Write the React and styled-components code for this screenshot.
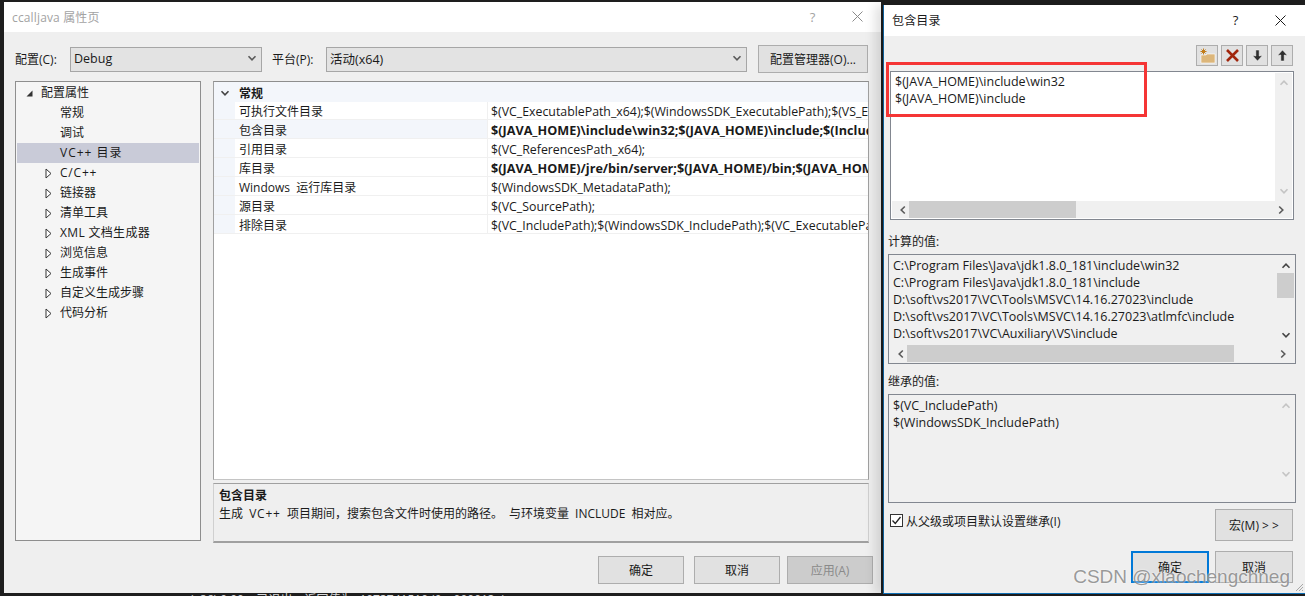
import React from "react";
import styled, { createGlobalStyle } from "styled-components";

const Global = createGlobalStyle`
  html, body {
    margin: 0;
    padding: 0;
    background: #1e1e1e;
  }
  * {
    box-sizing: border-box;
  }
`;

const FONT = `"Open Sans", "Noto Sans CJK SC", sans-serif`;

const Desktop = styled.div`
  position: relative;
  display: flex;
  align-items: flex-start;
  width: 1305px;
  height: 596px;
  overflow: hidden;
  padding-left: 4px;
  background: #1e1e1e;
  font-family: ${FONT};
  font-size: 12px;
  color: #1a1a1a;
`;

const BehindText = styled.div`
  position: absolute;
  left: 190px;
  top: 590px;
  color: #d8d8d8;
  font-size: 12px;
  white-space: pre;
`;

const Dialog = styled.div`
  position: relative;
  display: flex;
  flex-direction: column;
  flex: none;
  width: ${p => p.$width}px;
  height: ${p => p.$height}px;
  margin-top: ${p => p.$top}px;
  margin-left: ${p => p.$left || 0}px;
  background: #efefef;
`;

const SideDialog = styled(Dialog)`
  border-left: 1px solid #0f5f99;
  border-bottom: 1px solid #0f6fb5;
  box-shadow: -8px 0 10px rgba(0, 0, 0, 0.12);
`;

const TitleBar = styled.div`
  display: flex;
  align-items: center;
  flex: none;
  height: ${p => p.$height}px;
  padding-left: 8px;
  padding-bottom: 1px;
  background: #ffffff;
  font-size: 12px;
  color: ${p => (p.$inactive ? "#a3a3a3" : "#1a1a1a")};
`;

const TitleText = styled.span`
  flex: 1;
  letter-spacing: 0.15px;
`;

const TitleHelp = styled.span`
  width: 45px;
  font-size: 13px;
  text-align: center;
`;

const TitleClose = styled.span`
  display: flex;
  justify-content: center;
  width: 45px;
  margin-right: ${p => p.$right}px;
`;

const ToolRow = styled.div`
  display: flex;
  align-items: center;
  height: 28px;
  margin-top: 13px;
  padding-left: 11px;
`;

const ToolLabel = styled.label`
  flex: none;
  width: ${p => p.$width}px;
  padding-bottom: 1px;
  font-size: 12px;
`;

const Combo = styled.div`
  display: flex;
  align-items: center;
  justify-content: space-between;
  flex: none;
  width: ${p => p.$width}px;
  height: 25px;
  margin-right: ${p => p.$right}px;
  padding: 0 4px 2px 3px;
  background: #e3e3e3;
  border: 1px solid #a6a6a6;
  font-size: 12.5px;
`;

const Button = styled.button`
  flex: none;
  width: ${p => p.$width}px;
  height: ${p => p.$height}px;
  margin-right: ${p => p.$after || 0}px;
  padding: 0;
  background: ${p => (p.$disabled ? "#cccccc" : "#e1e1e1")};
  border: ${p => (p.$primary ? "2px solid #0078d7" : "1px solid #adadad")};
  font-family: ${FONT};
  font-size: 12px;
  color: ${p => (p.$disabled ? "#8a8a8a" : "#1a1a1a")};
`;

const Panes = styled.div`
  display: flex;
  gap: 12px;
  margin-top: 8px;
  padding-left: 11px;
`;

const Tree = styled.div`
  flex: none;
  width: 186px;
  height: 460px;
  padding: 1px;
  background: #f5f5f5;
  border: 1px solid #8e8e8e;
`;

const TreeRow = styled.div`
  display: flex;
  align-items: center;
  height: 20px;
  padding-left: ${p => p.$indent}px;
  padding-bottom: 2px;
  background: ${p => (p.$selected ? "#c9cbd8" : "transparent")};
  letter-spacing: ${p => p.$spacing || 0}px;
`;

const TreeMark = styled.span`
  display: flex;
  justify-content: center;
  flex: none;
  width: 12px;
  margin-right: 6px;
  padding-top: 2px;
`;

const Right = styled.div`
  display: flex;
  flex-direction: column;
  gap: 3px;
  width: 656px;
`;

const Grid = styled.div`
  height: 399px;
  background: #ffffff;
  border: 1px solid #a0a0a0;
  border-bottom-color: #c4c4c4;
  border-top-color: #8e8e8e;
  overflow: hidden;
`;

const GroupRow = styled.div`
  display: flex;
  align-items: center;
  height: 20px;
  padding-top: 1px;
  background: #f3f6fb;
  font-weight: 700;
`;

const Gutter = styled.span`
  display: flex;
  justify-content: center;
  flex: none;
  width: 21px;
`;

const GroupName = styled.span`
  margin-left: 4px;
`;

const PropRow = styled.div`
  display: flex;
  height: ${p => p.$height}px;
  line-height: ${p => p.$height + 2}px;
  border-bottom: 1px solid #f0f0f0;
  box-shadow: inset 21px 0 0 #f3f6fb;
`;

const PropName = styled.div`
  flex: none;
  width: 253px;
  margin-left: 21px;
  padding-left: 4px;
  background: ${p => (p.$active ? "#f3f6fb" : "transparent")};
  border-right: 1px solid #f0f0f0;
  word-spacing: 3px;
`;

const PropValue = styled.div`
  flex: 1;
  min-width: 0;
  padding-left: 3px;
  white-space: nowrap;
  overflow: hidden;
  font-size: ${p => (p.$bold ? 12.65 : 12.33)}px;
  font-weight: ${p => (p.$bold ? 700 : 400)};
  background: ${p => (p.$active ? "#ffffff" : "transparent")};
`;

const Description = styled.div`
  height: 60px;
  padding: 3px 5px;
  border-top: 1px solid #a0a0a0;
  border-bottom: 2px solid #a0a0a0;
  border-left: 1px solid #d0d0d0;
  border-right: 1px solid #d0d0d0;
  line-height: 18px;
  word-spacing: 3px;
`;

const DescTitle = styled.div`
  font-weight: 700;
`;

const Wide = styled.span`
  letter-spacing: 0.8px;
`;

const Footer = styled.div`
  display: flex;
  justify-content: flex-end;
  gap: ${p => p.$gap}px;
  margin-top: ${p => p.$top}px;
  padding-right: ${p => p.$right}px;
`;

const IconBar = styled.div`
  display: flex;
  justify-content: flex-end;
  gap: 3px;
  height: 21px;
  margin-top: 9px;
  padding-right: 12px;
`;

const IconButton = styled.div`
  display: flex;
  align-items: center;
  justify-content: center;
  width: 22px;
  height: 21px;
  background: #e1e1e1;
  border: 1px solid #adadad;
`;

const FieldLabel = styled.div`
  height: 15px;
  margin: ${p => p.$top}px 0 5px 4px;
  line-height: 15px;
`;

const ListBox = styled.div`
  display: grid;
  grid-template-columns: 1fr 17px;
  grid-template-rows: 1fr 17px;
  flex: none;
  width: ${p => p.$width}px;
  height: ${p => p.$height}px;
  margin-left: ${p => p.$left}px;
  margin-top: ${p => p.$top || 0}px;
  padding: 1px;
  background: ${p => (p.$active ? "#ffffff" : "#f0f0f0")};
  border: 1px solid #828790;
`;

const ListText = styled.div`
  padding: ${p => p.$top}px 3px;
  font-size: 12.5px;
  line-height: 17px;
  white-space: nowrap;
  overflow: hidden;
`;

const VBar = styled.div`
  position: relative;
  display: flex;
  flex-direction: column;
  justify-content: space-between;
  align-items: center;
  padding: 5px 0;
  background: #f0f0f0;
`;

const VThumb = styled.div`
  position: absolute;
  top: 17px;
  left: 0;
  width: 100%;
  height: 25px;
  background: #cdcdcd;
`;

const HBar = styled.div`
  position: relative;
  display: flex;
  grid-column: 1 / 3;
  align-items: center;
  justify-content: space-between;
  height: 17px;
  padding: 0 6px;
  background: #f0f0f0;
`;

const HThumb = styled.div`
  position: absolute;
  top: 0;
  bottom: 0;
  left: 17px;
  width: ${p => p.$width}px;
  background: #cdcdcd;
`;

const CheckRow = styled.div`
  display: flex;
  align-items: flex-start;
  height: 32px;
  margin: 6px 12px 0 6px;
`;

const CheckBox = styled.span`
  display: flex;
  align-items: center;
  justify-content: center;
  flex: none;
  width: 13px;
  height: 13px;
  margin-top: 5px;
  background: #ffffff;
  border: 1px solid #333333;
`;

const CheckLabel = styled.span`
  flex: 1;
  margin-top: 3px;
  margin-left: 3px;
`;

const Highlight = styled.div`
  position: absolute;
  left: 2px;
  top: 57px;
  width: 261px;
  height: 55px;
  border: 3px solid #f53535;
  pointer-events: none;
`;

const Watermark = styled.div`
  position: absolute;
  right: 15px;
  bottom: 8px;
  font-family: "Liberation Sans", "Noto Sans CJK SC", sans-serif;
  font-size: 19px;
  color: rgba(110, 110, 110, 0.7);
  text-shadow: 0 0 2px #ffffff;
  white-space: nowrap;
`;

const Grip = styled.svg`
  position: absolute;
  right: 1px;
  bottom: 1px;
`;

const Chevron = ({ dir = "down", color = "#5a5a5a", size = 10 }) => {
  const paths = {
    down: "M1.5 3.2 5 6.8 8.5 3.2",
    up: "M1.5 6.8 5 3.2 8.5 6.8",
    left: "M6.8 1.5 3.2 5 6.8 8.5",
    right: "M3.2 1.5 6.8 5 3.2 8.5",
  };
  return (
    <svg width={size} height={size} viewBox="0 0 10 10">
      <path d={paths[dir]} fill="none" stroke={color} strokeWidth="1.6" />
    </svg>
  );
};

const Close = ({ color }) => (
  <svg width="11" height="11" viewBox="0 0 11 11">
    <path d="M.5.5l10 10M10.500.5l-10 10" stroke={color} strokeWidth="1" fill="none" />
  </svg>
);

const Expanded = () => (
  <svg width="7" height="7" viewBox="0 0 7 7">
    <path d="M6.500.5V6.500H.5Z" fill="#333" />
  </svg>
);

const Collapsed = () => (
  <svg width="7" height="11" viewBox="0 0 7 11">
    <path d="M1 1 6 5.500 1 10Z" fill="#fff" stroke="#333" strokeWidth="1" />
  </svg>
);

const NewFolder = () => (
  <svg width="17" height="16" viewBox="0 0 17 16">
    <path d="M2 7h5l1-1h8v9H2Z" fill="#dcb67a" stroke="#fff" strokeWidth=".6" />
    <path d="M4.500.5v6M1.500 3.500h6M2.500 1.500l4 4M6.500 1.500l-4 4" stroke="#c27d1a" strokeWidth="1" />
  </svg>
);

const DeleteMark = () => (
  <svg width="15" height="15" viewBox="0 0 15 15">
    <path d="M2 2l11 11M13 2 2 13" stroke="#a1260d" strokeWidth="2.6" />
  </svg>
);

const ArrowMark = ({ up }) => (
  <svg width="11" height="13" viewBox="0 0 11 13">
    <g transform={up ? "" : "rotate(180 5.500 6.500)"}>
      <path d="M5.500 1 10.500 6.500 7.200 6V12H3.800V6L.5 6.500Z" fill="#2f2f2f" stroke="#fff" strokeWidth=".5" />
    </g>
  </svg>
);

const TREE = [
  { label: "常规" },
  { label: "调试" },
  { label: "VC++ 目录", selected: true, spacing: 1 },
  { label: "C/C++", collapsed: true, spacing: 0.8 },
  { label: "链接器", collapsed: true },
  { label: "清单工具", collapsed: true },
  { label: "XML 文档生成器", collapsed: true, spacing: 0.33 },
  { label: "浏览信息", collapsed: true },
  { label: "生成事件", collapsed: true },
  { label: "自定义生成步骤", collapsed: true },
  { label: "代码分析", collapsed: true },
];

const PROPS = [
  { name: "可执行文件目录", value: "$(VC_ExecutablePath_x64);$(WindowsSDK_ExecutablePath);$(VS_ExecutablePath);$(MSBuild_ExecutablePath)", height: 18 },
  { name: "包含目录", value: "$(JAVA_HOME)\\include\\win32;$(JAVA_HOME)\\include;$(IncludePath)", bold: true, active: true },
  { name: "引用目录", value: "$(VC_ReferencesPath_x64);" },
  { name: "库目录", value: "$(JAVA_HOME)/jre/bin/server;$(JAVA_HOME)/bin;$(JAVA_HOME)/lib;$(LibraryPath)", bold: true },
  { name: "Windows 运行库目录", value: "$(WindowsSDK_MetadataPath);" },
  { name: "源目录", value: "$(VC_SourcePath);" },
  { name: "排除目录", value: "$(VC_IncludePath);$(WindowsSDK_IncludePath);$(VC_ExecutablePath_x64);$(VC_LibraryPath_x64)" },
];

const COMPUTED = [
  "C:\\Program Files\\Java\\jdk1.8.0_181\\include\\win32",
  "C:\\Program Files\\Java\\jdk1.8.0_181\\include",
  "D:\\soft\\vs2017\\VC\\Tools\\MSVC\\14.16.27023\\include",
  "D:\\soft\\vs2017\\VC\\Tools\\MSVC\\14.16.27023\\atlmfc\\include",
  "D:\\soft\\vs2017\\VC\\Auxiliary\\VS\\include",
];

const PropertyDialog = () => (
  <Dialog $width={877} $height={591} $top={2}>
    <TitleBar $height={30} $inactive>
      <TitleText>ccalljava 属性页</TitleText>
      <TitleHelp>?</TitleHelp>
      <TitleClose $right={1}>
        <Close color="#8a8a8a" />
      </TitleClose>
    </TitleBar>
    <ToolRow>
      <ToolLabel $width={55}>配置(C):</ToolLabel>
      <Combo $width={192} $right={10}>
        Debug
        <Chevron />
      </Combo>
      <ToolLabel $width={54}>平台(P):</ToolLabel>
      <Combo $width={421} $right={11}>
        活动(x64)
        <Chevron />
      </Combo>
      <Button $width={110} $height={28}>配置管理器(O)...</Button>
    </ToolRow>
    <Panes>
      <Tree>
        <TreeRow $indent={6}>
          <TreeMark>
            <Expanded />
          </TreeMark>
          配置属性
        </TreeRow>
        {TREE.map(item => (
          <TreeRow
            key={item.label}
            $indent={item.collapsed ? 25 : 43}
            $selected={item.selected}
            $spacing={item.spacing}
          >
            {item.collapsed && (
              <TreeMark>
                <Collapsed />
              </TreeMark>
            )}
            {item.label}
          </TreeRow>
        ))}
      </Tree>
      <Right>
        <Grid>
          <GroupRow>
            <Gutter>
              <Chevron color="#444" />
            </Gutter>
            <GroupName>常规</GroupName>
          </GroupRow>
          {PROPS.map(row => (
            <PropRow key={row.name} $height={row.height || 19}>
              <PropName $active={row.active}>{row.name}</PropName>
              <PropValue $bold={row.bold} $active={row.active}>{row.value}</PropValue>
            </PropRow>
          ))}
        </Grid>
        <Description>
          <DescTitle>包含目录</DescTitle>
          生成 <Wide>VC++</Wide> 项目期间，搜索包含文件时使用的路径。 与环境变量 INCLUDE 相对应。
        </Description>
      </Right>
    </Panes>
    <Footer $gap={7} $top={13} $right={8}>
      <Button $width={86} $height={28} $after={3}>确定</Button>
      <Button $width={86} $height={28}>取消</Button>
      <Button $width={86} $height={28} $disabled>应用(A)</Button>
    </Footer>
  </Dialog>
);

const IncludeDialog = () => (
  <SideDialog $width={422} $height={589} $top={5} $left={2}>
    <TitleBar $height={31}>
      <TitleText>包含目录</TitleText>
      <TitleHelp>?</TitleHelp>
      <TitleClose $right={2}>
        <Close color="#1a1a1a" />
      </TitleClose>
    </TitleBar>
    <IconBar>
      <IconButton><NewFolder /></IconButton>
      <IconButton><DeleteMark /></IconButton>
      <IconButton><ArrowMark /></IconButton>
      <IconButton><ArrowMark up /></IconButton>
    </IconBar>
    <ListBox $width={404} $height={149} $left={6} $top={5} $active>
      <ListText $top={0}>
        $(JAVA_HOME)\include\win32
        <br />
        $(JAVA_HOME)\include
      </ListText>
      <VBar>
        <Chevron dir="up" color="#c4c4c4" />
        <Chevron color="#c4c4c4" />
      </VBar>
      <HBar>
        <Chevron dir="left" />
        <HThumb $width={167} />
        <Chevron dir="right" />
      </HBar>
    </ListBox>
    <FieldLabel $top={14}>计算的值:</FieldLabel>
    <ListBox $width={408} $height={110} $left={4}>
      <ListText $top={1}>
        {COMPUTED.map(line => (
          <div key={line}>{line}</div>
        ))}
      </ListText>
      <VBar>
        <Chevron dir="up" color="#444" />
        <VThumb />
        <Chevron color="#444" />
      </VBar>
      <HBar>
        <Chevron dir="left" />
        <HThumb $width={327} />
        <Chevron dir="right" />
      </HBar>
    </ListBox>
    <FieldLabel $top={10}>继承的值:</FieldLabel>
    <ListBox $width={408} $height={109} $left={4}>
      <ListText $top={1}>
        $(VC_IncludePath)
        <br />
        $(WindowsSDK_IncludePath)
      </ListText>
      <VBar>
        <Chevron dir="up" color="#c4c4c4" />
        <Chevron color="#c4c4c4" />
      </VBar>
    </ListBox>
    <CheckRow>
      <CheckBox>
        <svg width="11" height="11" viewBox="0 0 11 11">
          <path d="M1.500 5.500 4.300 8.500 9.500 2" fill="none" stroke="#222" strokeWidth="1.300" />
        </svg>
      </CheckBox>
      <CheckLabel>从父级或项目默认设置继承(I)</CheckLabel>
      <Button $width={78} $height={32}>宏(M) &gt; &gt;</Button>
    </CheckRow>
    <Footer $gap={6} $top={10} $right={12}>
      <Button $width={78} $height={32} $primary>确定</Button>
      <Button $width={78} $height={32}>取消</Button>
    </Footer>
    <Highlight />
    <Grip width="10" height="10" viewBox="0 0 10 10">
      <path d="M9 2 2 9M9 5 5 9M9 8 8 9" stroke="#a8a8a8" strokeWidth="1" />
    </Grip>
  </SideDialog>
);

export default function App() {
  return (
    <Desktop>
      <Global />
      <BehindText>(x86) 0:00    已退出，返回值为 -1073741510 (0xc000013a)</BehindText>
      <PropertyDialog />
      <IncludeDialog />
      <Watermark>CSDN @xiaochengchneg</Watermark>
    </Desktop>
  );
}
